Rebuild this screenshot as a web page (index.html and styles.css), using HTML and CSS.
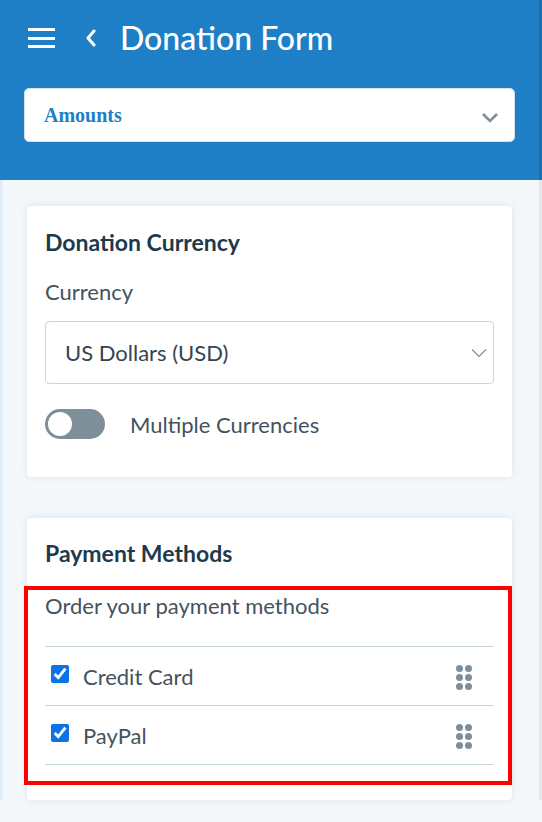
FILE: index.html
```html
<!DOCTYPE html>
<html lang="en">
<head>
    <meta charset="UTF-8">
    <meta name="viewport" content="width=device-width, initial-scale=1.0">
    <title>Donation Form</title>
    <link rel="stylesheet" href="styles.css">
</head>
<body>
    <div class="topbar">
        <div class="titlebar">
            <span class="menu-btn">
                <i></i><i></i><i></i>
            </span>
            <svg class="back" width="14" height="18" viewBox="0 0 14 18">
                <path d="M10 2 L4 9 L10 16" fill="none" stroke="#fff" stroke-width="3" stroke-linecap="round" stroke-linejoin="round"/>
            </svg>
            <h1>Donation Form</h1>
        </div>
        <div class="section-picker">
            <span>Amounts</span>
            <svg width="18" height="12" viewBox="0 0 18 12">
                <path d="M2 3 L9 10 L16 3" fill="none" stroke="#7f8f99" stroke-width="2.6"/>
            </svg>
        </div>
    </div>

    <div class="content">
        <div class="card">
            <h2>Donation Currency</h2>
            <div class="label">Currency</div>
            <div class="select">
                <span>US Dollars (USD)</span>
                <svg width="16" height="10" viewBox="0 0 16 10">
                    <path d="M1 1.5 L8 8.5 L15 1.5" fill="none" stroke="#7f8f99" stroke-width="1.2"/>
                </svg>
            </div>
            <div class="toggle-row">
                <span class="toggle"><i></i></span>
                <span>Multiple Currencies</span>
            </div>
        </div>

        <div class="card card-payments">
            <h2>Payment Methods</h2>
            <div class="label">Order your payment methods</div>
            <ul class="methods">
                <li>
                    <input type="checkbox" checked>
                    <span>Credit Card</span>
                    <span class="grip"><i></i><i></i><i></i><i></i><i></i><i></i></span>
                </li>
                <li>
                    <input type="checkbox" checked>
                    <span>PayPal</span>
                    <span class="grip"><i></i><i></i><i></i><i></i><i></i><i></i></span>
                </li>
            </ul>
            <div class="highlight"></div>
        </div>
    </div>
</body>
</html>
```

FILE: styles.css
```css
*{
    margin: 0;
    padding: 0;
    box-sizing: border-box;
}
body{
    background-color: #f3f7fa;
    font-family: Lato, "Liberation Sans", sans-serif;
    color: #44535e;
    width: 542px;
    height: 822px;
    overflow: hidden;
}
.topbar{
    height: 180px;
    background-color: #1f7fc6;
    padding: 0 24px 0 24px;
    border-right: 3px solid #1a70b0;
}
.titlebar{
    height: 88px;
    display: flex;
    align-items: flex-start;
    padding-top: 19px;
    padding-left: 4px;
}
.menu-btn{
    width: 27px;
    height: 20px;
    display: flex;
    flex-direction: column;
    justify-content: space-between;
    margin-top: 9px;
}
.menu-btn i{
    display: block;
    height: 3px;
    background-color: #fff;
}
.back{
    margin: 10px 0 0 29px;
}
h1{
    font-size: 32px;
    font-weight: 500;
    color: #fff;
    line-height: 38px;
    margin-left: 22px;
}
.section-picker{
    height: 54px;
    background-color: #fff;
    border-radius: 5px;
    border: 1px solid #d4e0ea;
    display: flex;
    align-items: center;
    justify-content: space-between;
    padding: 0 15px 0 19px;
}
.section-picker span{
    font-family: "Liberation Serif", serif;
    font-weight: bold;
    font-size: 20px;
    color: #1f7fc6;
}
.section-picker svg{
    margin-top: 4px;
}
.content{
    padding: 26px 27px 0 24px;
    border-left: 3px solid #e2edf7;
    border-right: 3px solid #e4e8ec;
}
.card{
    position: relative;
    background-color: #fff;
    border-radius: 4px;
    box-shadow: 0 0 6px rgba(170, 200, 225, 0.35);
    padding: 20px 18px 38px 18px;
    margin-bottom: 41px;
}
h2{
    font-size: 23px;
    font-weight: bold;
    color: #1e3a4a;
    line-height: 32px;
}
.label{
    font-size: 22px;
    line-height: 28px;
    margin-top: 20px;
}
.select{
    margin-top: 15px;
    height: 63px;
    border: 1px solid #c8d6e0;
    border-radius: 4px;
    display: flex;
    align-items: center;
    justify-content: space-between;
    padding: 0 6px 0 19px;
    font-size: 22px;
    color: #34444f;
}
.toggle-row{
    margin-top: 25px;
    display: flex;
    align-items: center;
    font-size: 22px;
    gap: 25px;
}
.toggle{
    width: 60px;
    height: 30px;
    border-radius: 15px;
    background-color: #7f8f99;
    padding: 3px;
}
.toggle i{
    display: block;
    width: 24px;
    height: 24px;
    border-radius: 50%;
    background-color: #fff;
}
.card-payments{
    padding-top: 19px;
    padding-bottom: 35px;
}
.card-payments .label{
    margin-top: 23px;
}
.methods{
    list-style: none;
    margin-top: 26px;
    border-top: 1px solid #c8d6e0;
}
.methods li{
    height: 59px;
    border-bottom: 1px solid #c8d6e0;
    display: flex;
    align-items: center;
    padding: 0 22px 0 6px;
    font-size: 22px;
}
.methods input{
    width: 18px;
    height: 18px;
    margin: -4px 14px 0 0;
    accent-color: #0b73e6;
}
.grip{
    margin-left: auto;
    width: 16px;
    display: grid;
    grid-template-columns: 7px 7px;
    gap: 2px 2px;
    margin-top: 2px;
}
.grip i{
    width: 7px;
    height: 7px;
    border-radius: 50%;
    background-color: #7f8f99;
}
/* red annotation frame over the list */
.highlight{
    position: absolute;
    left: -3px;
    right: 0;
    top: 68px;
    height: 199px;
    border: 4px solid #ff0000;
}
```
